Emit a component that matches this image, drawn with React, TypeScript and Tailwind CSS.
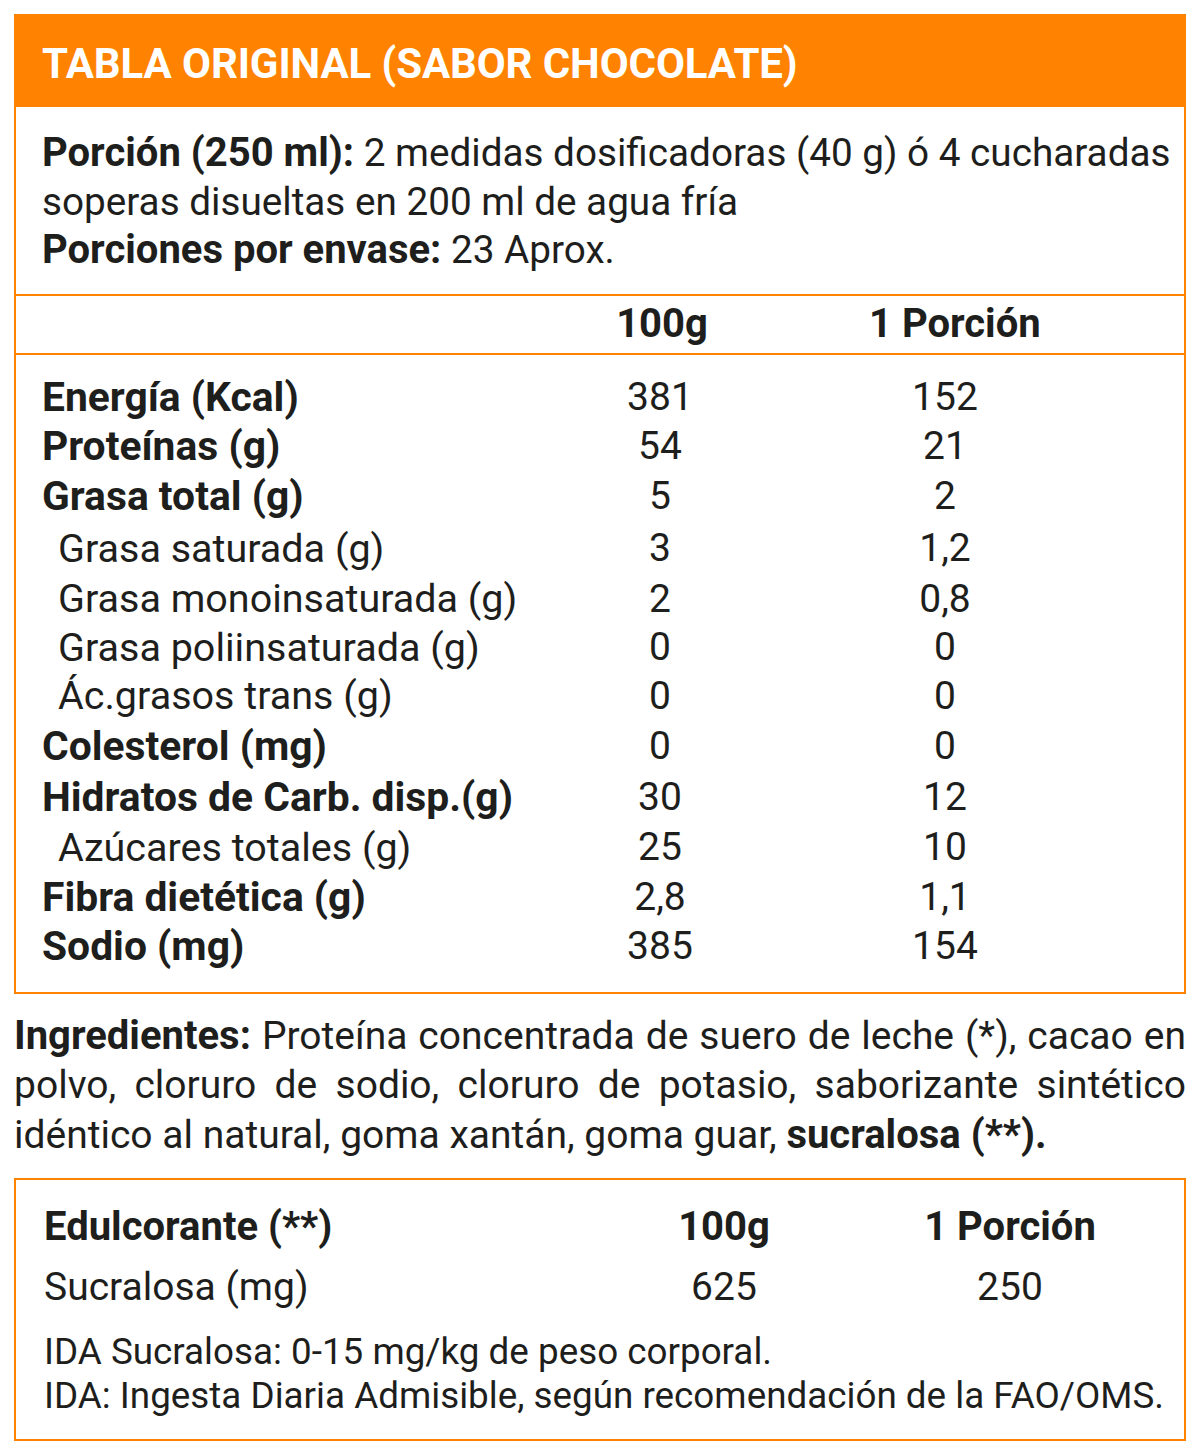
const rows = [
  { label: "Energía (Kcal)", a: "381", b: "152", bold: true, h: "h-[48px]" },
  { label: "Proteínas (g)", a: "54", b: "21", bold: true, h: "h-[49px]" },
  { label: "Grasa total (g)", a: "5", b: "2", bold: true, h: "h-[52px]" },
  { label: "Grasa saturada (g)", a: "3", b: "1,2", bold: false, h: "h-[52px]" },
  { label: "Grasa monoinsaturada (g)", a: "2", b: "0,8", bold: false, h: "h-[49px]" },
  { label: "Grasa poliinsaturada (g)", a: "0", b: "0", bold: false, h: "h-[48px]" },
  { label: "Ác.grasos trans (g)", a: "0", b: "0", bold: false, h: "h-[49px]" },
  { label: "Colesterol (mg)", a: "0", b: "0", bold: true, h: "h-[51px]" },
  { label: "Hidratos de Carb. disp.(g)", a: "30", b: "12", bold: true, h: "h-[51px]" },
  { label: "Azúcares totales (g)", a: "25", b: "10", bold: false, h: "h-[50px]" },
  { label: "Fibra dietética (g)", a: "2,8", b: "1,1", bold: true, h: "h-[50px]" },
  { label: "Sodio (mg)", a: "385", b: "154", bold: true, h: "h-[47px]" },
];

export default function App() {
  return (
    <div className="w-[1200px] h-[1455px] bg-white pt-[14px] px-[14px] text-[#1e1e1c] font-['Roboto',sans-serif]">
      {/* Tabla nutricional */}
      <div className="border-2 border-[#ff8300]">
        <div className="h-[93px] -mt-[2px] -mx-[2px] bg-[#ff8300] flex items-center pl-[28px] pt-[6px]">
          <h1 className="text-white font-bold text-[42px] leading-none tracking-[-0.1px] whitespace-nowrap">
            TABLA ORIGINAL (SABOR CHOCOLATE)
          </h1>
        </div>

        <div className="pl-[26px] pr-[10px] pt-[22px] pb-[19px] text-[38.7px] leading-[48.5px] whitespace-nowrap">
          <p>
            <span className="font-bold text-[40px]">Porción (250 ml):</span> 2 medidas dosificadoras (40 g) ó 4 cucharadas
          </p>
          <p>soperas disueltas en 200 ml de agua fría</p>
          <p>
            <span className="font-bold text-[40px]">Porciones por envase:</span> 23 Aprox.
          </p>
        </div>

        <div className="border-t-2 border-b-2 border-[#ff8300] h-[61px] grid grid-cols-[554px_180px_105px_180px] items-center text-[40px] leading-none font-bold whitespace-nowrap">
          <div />
          <div className="text-center pl-1">100g</div>
          <div />
          <div className="text-center pl-[14px]">1 Porción</div>
        </div>

        <div className="pl-[26px] pt-[19px] pb-[22px] text-[39px] leading-none">
          {rows.map((r) => (
            <div
              key={r.label}
              className={`grid grid-cols-[528px_180px_105px_180px] items-center whitespace-nowrap ${r.h}`}
            >
              <div className={r.bold ? "font-bold text-[40.8px]" : "pl-[16px] text-[39.5px]"}>{r.label}</div>
              <div className="text-center">{r.a}</div>
              <div />
              <div className="text-center">{r.b}</div>
            </div>
          ))}
        </div>
      </div>

      {/* Ingredientes */}
      <div className="mt-[17px] text-[39px] leading-[49px] whitespace-nowrap">
        <p className="text-justify [text-align-last:justify]">
          <span className="font-bold text-[40px]">Ingredientes:</span> Proteína concentrada de suero de leche (*), cacao en
        </p>
        <p className="text-justify [text-align-last:justify] whitespace-normal">
          polvo, cloruro de sodio, cloruro de potasio, saborizante sintético
        </p>
        <p>
          idéntico al natural, goma xantán, goma guar, <span className="font-bold text-[40px]">sucralosa (**).</span>
        </p>
      </div>

      {/* Edulcorante */}
      <div className="mt-[18px] border-2 border-[#ff8300] h-[263px] pl-[28px] pt-[22px] whitespace-nowrap">
        <div className="grid grid-cols-[590px_180px_106px_180px] items-center h-[50px] text-[40px] leading-none font-bold">
          <div>Edulcorante (**)</div>
          <div className="text-center">100g</div>
          <div />
          <div className="text-center">1 Porción</div>
        </div>
        <div className="grid grid-cols-[590px_180px_106px_180px] items-center h-[50px] mt-[11px] text-[39px] leading-none">
          <div>Sucralosa (mg)</div>
          <div className="text-center">625</div>
          <div />
          <div className="text-center">250</div>
        </div>
        <div className="mt-[17px] text-[36.8px] leading-[44px]">
          <p>IDA Sucralosa: 0-15 mg/kg de peso corporal.</p>
          <p>IDA: Ingesta Diaria Admisible, según recomendación de la FAO/OMS.</p>
        </div>
      </div>
    </div>
  );
}
